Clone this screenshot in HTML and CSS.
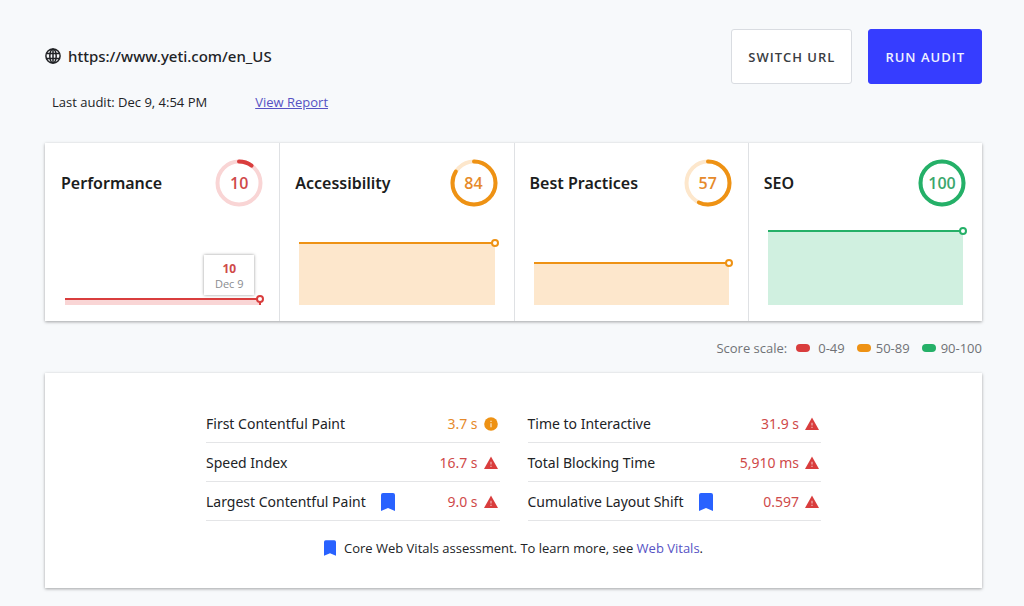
FILE: index.html
```
<!DOCTYPE html>
<html lang="en">
<head>
<meta charset="utf-8">
<meta name="viewport" content="width=device-width, initial-scale=1">
<title>Site audit</title>
<link rel="stylesheet" href="styles.css">
</head>
<body>
<svg class="sprite" aria-hidden="true">
  <symbol id="bookmark" viewBox="0 0 14 18"><path d="M2 0h10a2 2 0 0 1 2 2v16l-7-3-7 3V2a2 2 0 0 1 2-2z"/></symbol>
  <symbol id="warn" viewBox="0 0 14 14"><path d="M7 .5l7 12.5H0z"/><path d="M6.4 5.8h1.2v2.8H6.4zM6.4 9.8h1.2V11H6.4z" fill="#fff" opacity=".6"/></symbol>
  <symbol id="info" viewBox="0 0 14 14"><circle cx="7" cy="7" r="6.8"/><path d="M6.4 3.8h1.2V5H6.4zM6.4 6.2h1.2v4H6.4z" fill="#fff" opacity=".8"/></symbol>
</svg>
<main class="page">
  <header class="top">
    <div class="site">
      <h1 class="site-url">
        <svg class="globe" viewBox="0 0 16 16" aria-hidden="true"><circle cx="8" cy="8" r="7.1"/><ellipse cx="8" cy="8" rx="3.2" ry="7.1"/><path d="M1.4 5.5h13.2M1.4 10.5h13.2M8 1v14"/></svg>
        https://www.yeti.com/en_US
      </h1>
      <div class="site-meta"><span>Last audit: Dec 9, 4:54 PM</span><a href="#report">View Report</a></div>
    </div>
    <div class="actions">
      <button class="btn" type="button">SWITCH URL</button>
      <button class="btn btn-primary" type="button">RUN AUDIT</button>
    </div>
  </header>

  <section class="scores panel">
    <article class="score bad">
      <div class="score-head">
        <h2>Performance</h2>
        <div class="ring"><svg viewBox="0 0 48 48" aria-hidden="true"><circle class="track" cx="24" cy="24" r="21.5"/><circle class="arc" cx="24" cy="24" r="21.5" pathLength="100" stroke-dasharray="10 100"/></svg><span>10</span></div>
      </div>
      <div class="chart">
        <div class="area" style="height:10%"><i class="stem"></i><i class="dot"></i><div class="tip"><b>10</b><span>Dec 9</span></div></div>
      </div>
    </article>
    <article class="score mid">
      <div class="score-head">
        <h2>Accessibility</h2>
        <div class="ring"><svg viewBox="0 0 48 48" aria-hidden="true"><circle class="track" cx="24" cy="24" r="21.5"/><circle class="arc" cx="24" cy="24" r="21.5" pathLength="100" stroke-dasharray="84 100"/></svg><span>84</span></div>
      </div>
      <div class="chart"><div class="area" style="height:84%"><i class="dot"></i></div></div>
    </article>
    <article class="score mid">
      <div class="score-head">
        <h2>Best Practices</h2>
        <div class="ring"><svg viewBox="0 0 48 48" aria-hidden="true"><circle class="track" cx="24" cy="24" r="21.5"/><circle class="arc" cx="24" cy="24" r="21.5" pathLength="100" stroke-dasharray="57 100"/></svg><span>57</span></div>
      </div>
      <div class="chart"><div class="area" style="height:57%"><i class="dot"></i></div></div>
    </article>
    <article class="score good">
      <div class="score-head">
        <h2>SEO</h2>
        <div class="ring"><svg viewBox="0 0 48 48" aria-hidden="true"><circle class="track" cx="24" cy="24" r="21.5"/><circle class="arc" cx="24" cy="24" r="21.5" pathLength="100" stroke-dasharray="100 100"/></svg><span>100</span></div>
      </div>
      <div class="chart"><div class="area" style="height:100%"><i class="dot"></i></div></div>
    </article>
  </section>

  <div class="legend">
    <span>Score scale:</span>
    <span class="key bad">0-49</span>
    <span class="key mid">50-89</span>
    <span class="key good">90-100</span>
  </div>

  <section class="metrics panel">
    <dl class="metric-grid">
      <div class="metric mid"><dt>First Contentful Paint</dt><dd>3.7 s<svg class="state"><use href="#info"/></svg></dd></div>
      <div class="metric bad"><dt>Time to Interactive</dt><dd>31.9 s<svg class="state"><use href="#warn"/></svg></dd></div>
      <div class="metric bad"><dt>Speed Index</dt><dd>16.7 s<svg class="state"><use href="#warn"/></svg></dd></div>
      <div class="metric bad"><dt>Total Blocking Time</dt><dd>5,910 ms<svg class="state"><use href="#warn"/></svg></dd></div>
      <div class="metric bad"><dt>Largest Contentful Paint<svg class="mark"><use href="#bookmark"/></svg></dt><dd>9.0 s<svg class="state"><use href="#warn"/></svg></dd></div>
      <div class="metric bad"><dt>Cumulative Layout Shift<svg class="mark"><use href="#bookmark"/></svg></dt><dd>0.597<svg class="state"><use href="#warn"/></svg></dd></div>
    </dl>
    <p class="note"><svg class="mark mark-small"><use href="#bookmark"/></svg><span>Core Web Vitals assessment. To learn more, see <a href="#vitals">Web Vitals</a>.</span></p>
  </section>
</main>
</body>
</html>
```
FILE: styles.css
```
* { box-sizing: border-box; }
body {
  margin: 0;
  background: #f7f9fb;
  color: #212326;
  font-family: "Segoe UI", "Open Sans", "Noto Sans", sans-serif;
  font-size: 14px;
  line-height: 20px;
}
h1, h2, p, dl, dd { margin: 0; }
.sprite { position: absolute; width: 0; height: 0; }
.page { padding: 29px 42px 16px 45px; }
.panel {
  background: #fff;
  box-shadow: 0 1px 3px rgba(0, 0, 0, .35);
}

.top { display: flex; justify-content: space-between; align-items: flex-start; }
.site { padding-top: 15px; }
.site-url {
  display: flex;
  align-items: center;
  gap: 7px;
  font-family: "Segoe UI", "Noto Sans", sans-serif;
  font-size: 15px;
  font-weight: 500;
  line-height: 24px;
}
.globe { width: 16px; height: 16px; fill: none; stroke: #212326; stroke-width: 1.5; }
.site-meta {
  display: flex;
  gap: 48px;
  padding: 24px 0 0 7px;
  font-size: 13px;
}
.site-meta a { color: #5652c4; }
.actions { display: flex; gap: 16px; }
.btn {
  height: 55px;
  padding: 0 16px;
  border: 1px solid #d9dce1;
  border-radius: 3px;
  background: #fff;
  color: #3a3d42;
  font: 600 13px "Segoe UI", "Open Sans", "Noto Sans", sans-serif;
  letter-spacing: 1px;
}
.btn-primary { border-color: #363dff; background: #363dff; color: #f0f1ff; }

.bad { --line: #d93d3d; --fill: #f9d5d5; --text: #cf4a4a; }
.mid { --line: #ee9214; --fill: #fde7cc; --text: #e68a2a; }
.good { --line: #25b068; --fill: #d0f0e0; --text: #3aa76d; }

.scores {
  display: grid;
  grid-template-columns: repeat(4, 1fr);
  margin-top: 31px;
}
.score { padding: 16px; }
.score + .score { border-left: 1px solid #dfe1e4; padding-left: 15px; }
.score-head {
  display: flex;
  align-items: center;
  justify-content: space-between;
  margin-bottom: 23px;
}
.score h2 {
  color: #1b1d20;
  font-family: "Segoe UI", "Noto Sans", sans-serif;
  font-size: 16px;
  font-weight: 600;
}
.ring { display: grid; place-items: center; width: 48px; height: 48px; }
.ring > * { grid-area: 1 / 1; }
.ring svg { width: 48px; height: 48px; transform: rotate(-90deg); fill: none; stroke-width: 4; }
.track { stroke: var(--fill); }
.arc { stroke: var(--line); stroke-linecap: round; }
.ring span { color: var(--text); font-size: 16px; font-weight: 600; }
.chart {
  display: flex;
  align-items: flex-end;
  height: 75px;
  margin: 0 3px 0 4px;
}
.area {
  position: relative;
  flex: 1;
  border-top: 2px solid var(--line);
  background: var(--fill);
}
.dot {
  position: absolute;
  top: -5px;
  right: -4px;
  width: 8px;
  height: 8px;
  border: 2px solid var(--line);
  border-radius: 50%;
  background: #fff;
}
.stem { position: absolute; top: 0; right: -1px; width: 2px; height: 100%; background: var(--line); }
.tip {
  position: absolute;
  right: 6px;
  bottom: 10px;
  width: 50px;
  padding: 6px 0 4px;
  background: #fff;
  box-shadow: 0 0 3px rgba(0, 0, 0, .4);
  font-size: 11px;
  line-height: 15px;
  text-align: center;
}
.tip b, .tip span { display: block; }
.tip b { color: var(--text); font-size: 12px; }
.tip span { color: #8a8c90; }

.legend {
  display: flex;
  justify-content: flex-end;
  margin-top: 17px;
  color: #707276;
  font-size: 13px;
}
.key { display: flex; align-items: center; gap: 5px; margin-left: 12px; }
.key.bad { gap: 8px; margin-left: 9px; }
.key::before { content: ""; width: 14px; height: 8px; border-radius: 4px; background: var(--line); }

.metrics { margin-top: 15px; padding: 31px 16px 30px; }
.metric-grid {
  display: grid;
  grid-template-columns: 1fr 1fr;
  column-gap: 28px;
  max-width: 615px;
  margin: 0 auto;
  font-family: "Segoe UI", "Noto Sans", sans-serif;
}
.metric {
  display: flex;
  align-items: center;
  justify-content: space-between;
  height: 39px;
  padding-top: 2px;
  border-bottom: 1px solid #e4e5e7;
}
.metric dt, .metric dd { display: flex; align-items: center; }
.metric dd { gap: 6px; padding-right: 2px; color: var(--text); }
.state { width: 14px; height: 14px; fill: var(--line); }
.mark { width: 14px; height: 18px; margin-left: 15px; fill: #2962ff; }
.mark-small { width: 12px; height: 16px; margin: 0; }
.note {
  display: flex;
  align-items: center;
  justify-content: center;
  gap: 8px;
  margin-top: 17px;
  font-size: 13px;
}
.note a { color: #5652c4; text-decoration: none; }
```
